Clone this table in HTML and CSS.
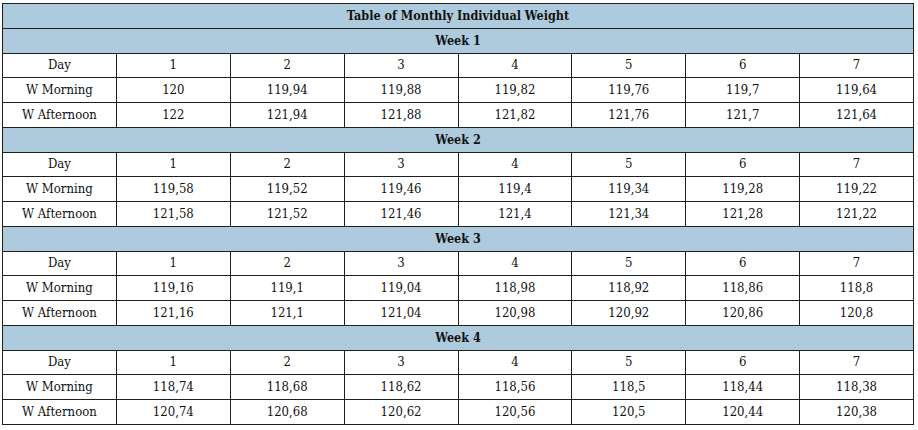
FILE: index.html
```html
<!DOCTYPE html>
<html>
<head>
<meta charset="utf-8">
<link rel="stylesheet" href="styles.css">
</head>
<body>
<div class="wrap">
<table class="weights">
<colgroup><col><col><col><col><col><col><col><col></colgroup>
<tr class="head"><td colspan="8">Table of Monthly Individual Weight</td></tr>
<tr class="head"><td colspan="8">Week 1</td></tr>
<tr><td>Day</td><td>1</td><td>2</td><td>3</td><td>4</td><td>5</td><td>6</td><td>7</td></tr>
<tr><td>W Morning</td><td>120</td><td>119,94</td><td>119,88</td><td>119,82</td><td>119,76</td><td>119,7</td><td>119,64</td></tr>
<tr><td>W Afternoon</td><td>122</td><td>121,94</td><td>121,88</td><td>121,82</td><td>121,76</td><td>121,7</td><td>121,64</td></tr>
<tr class="head"><td colspan="8">Week 2</td></tr>
<tr><td>Day</td><td>1</td><td>2</td><td>3</td><td>4</td><td>5</td><td>6</td><td>7</td></tr>
<tr><td>W Morning</td><td>119,58</td><td>119,52</td><td>119,46</td><td>119,4</td><td>119,34</td><td>119,28</td><td>119,22</td></tr>
<tr><td>W Afternoon</td><td>121,58</td><td>121,52</td><td>121,46</td><td>121,4</td><td>121,34</td><td>121,28</td><td>121,22</td></tr>
<tr class="head"><td colspan="8">Week 3</td></tr>
<tr><td>Day</td><td>1</td><td>2</td><td>3</td><td>4</td><td>5</td><td>6</td><td>7</td></tr>
<tr><td>W Morning</td><td>119,16</td><td>119,1</td><td>119,04</td><td>118,98</td><td>118,92</td><td>118,86</td><td>118,8</td></tr>
<tr><td>W Afternoon</td><td>121,16</td><td>121,1</td><td>121,04</td><td>120,98</td><td>120,92</td><td>120,86</td><td>120,8</td></tr>
<tr class="head"><td colspan="8">Week 4</td></tr>
<tr><td>Day</td><td>1</td><td>2</td><td>3</td><td>4</td><td>5</td><td>6</td><td>7</td></tr>
<tr><td>W Morning</td><td>118,74</td><td>118,68</td><td>118,62</td><td>118,56</td><td>118,5</td><td>118,44</td><td>118,38</td></tr>
<tr><td>W Afternoon</td><td>120,74</td><td>120,68</td><td>120,62</td><td>120,56</td><td>120,5</td><td>120,44</td><td>120,38</td></tr>
</table>
</div>
</body>
</html>
```

FILE: styles.css
```css
html, body {
  margin: 0;
  padding: 0;
  background: #ffffff;
}
.wrap {
  padding: 3px 0 0 2px;
}
.weights {
  border-collapse: collapse;
  table-layout: fixed;
  width: 912px;
  font-family: "DejaVu Serif", "Liberation Serif", serif;
  font-stretch: condensed;
  font-size: 13px;
  color: #111111;
}
.weights td {
  border: 1px solid #1e1e1e;
  padding: 0;
  height: 23.76px;
  text-align: center;
  vertical-align: middle;
  line-height: 16px;
}
.weights tr.head td {
  background: #aecbdd;
  font-weight: bold;
  font-size: 12.5px;
}
```
